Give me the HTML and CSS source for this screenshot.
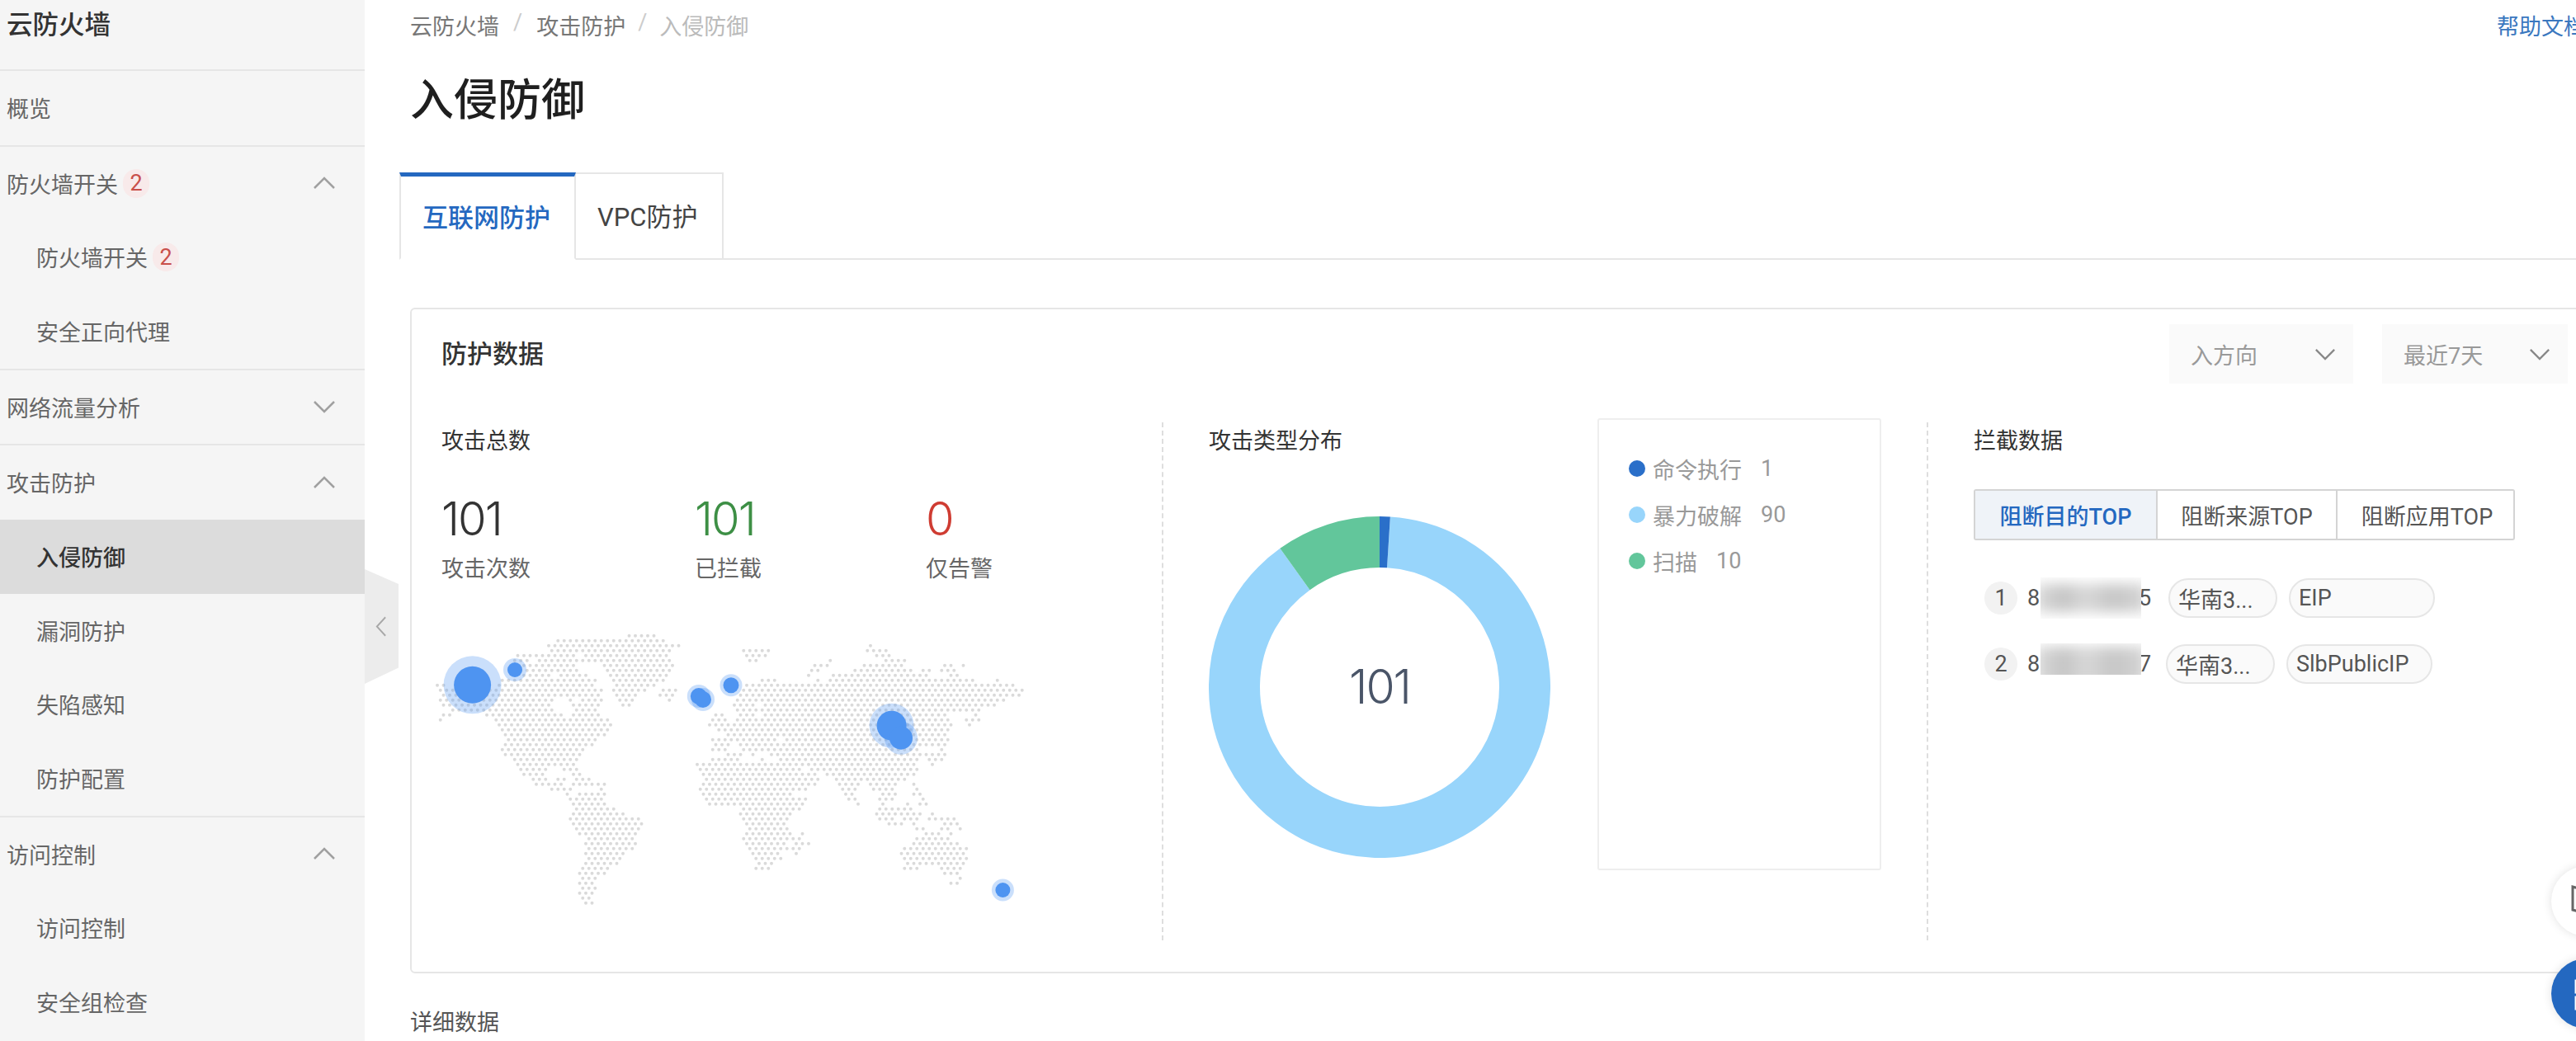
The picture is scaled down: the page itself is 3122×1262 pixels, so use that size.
FILE: index.html
```html
<!DOCTYPE html>
<html lang="zh-CN">
<head>
<meta charset="utf-8">
<title>入侵防御</title>
<link rel="stylesheet" href="styles.css">
</head>
<body>
<div class="app">
  <aside class="sidebar">
    <div class="side-title">云防火墙</div>
    <nav class="side-nav">
      <section class="side-group"><a class="side-row">概览</a></section>
      <section class="side-group">
        <a class="side-row"><span>防火墙开关</span><b class="badge">2</b><svg class="chev" viewBox="0 0 28 16"><path d="M2 14 14 2l12 12"/></svg></a>
        <a class="side-row sub"><span>防火墙开关</span><b class="badge">2</b></a>
        <a class="side-row sub">安全正向代理</a>
      </section>
      <section class="side-group">
        <a class="side-row"><span>网络流量分析</span><svg class="chev" viewBox="0 0 28 16"><path d="M2 2l12 12L26 2"/></svg></a>
      </section>
      <section class="side-group">
        <a class="side-row"><span>攻击防护</span><svg class="chev" viewBox="0 0 28 16"><path d="M2 14 14 2l12 12"/></svg></a>
        <a class="side-row sub active">入侵防御</a>
        <a class="side-row sub">漏洞防护</a>
        <a class="side-row sub">失陷感知</a>
        <a class="side-row sub">防护配置</a>
      </section>
      <section class="side-group">
        <a class="side-row"><span>访问控制</span><svg class="chev" viewBox="0 0 28 16"><path d="M2 14 14 2l12 12"/></svg></a>
        <a class="side-row sub">访问控制</a>
        <a class="side-row sub">安全组检查</a>
      </section>
    </nav>
    <div class="collapse"><svg viewBox="0 0 16 28"><path d="M14 2 3 14l11 12"/></svg></div>
  </aside>

  <main class="main">
    <div class="crumb-row">
      <div class="crumbs"><span>云防火墙</span><i>/</i><span>攻击防护</span><i class="last">/</i><span class="current">入侵防御</span></div>
      <a class="help">帮助文档</a>
    </div>
    <h1 class="page-title">入侵防御</h1>
    <div class="tabs">
      <a class="tab on">互联网防护</a>
      <a class="tab">VPC防护</a>
    </div>

    <section class="card">
      <header class="card-head">
        <h2>防护数据</h2>
        <div class="selects">
          <div class="select select-a"><span>入方向</span><svg viewBox="0 0 28 16"><path d="M2 2l12 12L26 2"/></svg></div>
          <div class="select"><span>最近7天</span><svg viewBox="0 0 28 16"><path d="M2 2l12 12L26 2"/></svg></div>
        </div>
      </header>
      <div class="card-body">
        <div class="col col-total">
          <h3>攻击总数</h3>
          <div class="stats">
            <div class="stat"><strong>101</strong><span>攻击次数</span></div>
            <div class="stat green"><strong>101</strong><span>已拦截</span></div>
            <div class="stat red"><strong>0</strong><span>仅告警</span></div>
          </div>
          <svg class="map" viewBox="0 0 780 390">
            <svg width="780" height="390" viewBox="0 -3.8 208 65" preserveAspectRatio="none">
              <path class="dots" vector-effect="non-scaling-stroke" d="M70 0H78.5M47 1H81.5M44 2H86.5M148 2H148.5M45 3H57.5M59 3H83.5M107 3H115.5M147 3H153.5M34 4H38.5M40 4H52.5M56 4H82.5M108 4H114.5M150 4H154.5M33 5H37.5M41 5H53.5M55 5H83.5M109 5H111.5M135 5H135.5M153 5H159.5M34 6H52.5M62 6H84.5M130 6H134.5M146 6H158.5M172 6H174.5M178 6H178.5M35 7H53.5M63 7H83.5M129 7H131.5M143 7H161.5M165 7H167.5M171 7H175.5M36 8H40.5M42 8H44.5M48 8H56.5M64 8H82.5M128 8H128.5M136 8H166.5M174 8H176.5M29 9H59.5M65 9H81.5M113 9H117.5M131 9H131.5M135 9H181.5M189 9H189.5M8 10H10.5M28 10H58.5M66 10H78.5M108 10H122.5M124 10H194.5M9 11H51.5M53 11H61.5M65 11H75.5M81 11H85.5M107 11H197.5M10 12H50.5M52 12H60.5M66 12H72.5M80 12H84.5M106 12H196.5M9 13H45.5M51 13H51.5M55 13H61.5M67 13H71.5M83 13H83.5M105 13H191.5M10 14H44.5M52 14H60.5M68 14H70.5M104 14H110.5M114 14H188.5M13 15H15.5M17 15H45.5M53 15H59.5M105 15H111.5M113 15H175.5M177 15H179.5M181 15H183.5M10 16H12.5M24 16H48.5M52 16H60.5M98 16H100.5M106 16H110.5M114 16H172.5M182 16H182.5M9 17H9.5M27 17H63.5M97 17H101.5M105 17H173.5M179 17H183.5M28 18H64.5M96 18H174.5M180 18H180.5M29 19H63.5M99 19H173.5M30 20H62.5M102 20H172.5M31 21H59.5M97 21H117.5M121 21H125.5M127 21H173.5M30 22H58.5M98 22H102.5M106 22H172.5M29 23H55.5M97 23H101.5M107 23H113.5M115 23H163.5M171 23H171.5M30 24H54.5M102 24H106.5M110 24H110.5M116 24H164.5M166 24H172.5M33 25H53.5M97 25H105.5M113 25H113.5M119 25H163.5M167 25H171.5M34 26H52.5M92 26H126.5M128 26H162.5M168 26H168.5M35 27H43.5M49 27H53.5M93 27H125.5M129 27H163.5M36 28H42.5M52 28H54.5M94 28H118.5M120 28H128.5M130 28H130.5M134 28H162.5M39 29H43.5M47 29H49.5M53 29H57.5M95 29H119.5M121 29H131.5M137 29H159.5M40 30H48.5M52 30H62.5M94 30H120.5M122 30H130.5M138 30H144.5M148 30H156.5M162 30H162.5M45 31H51.5M61 31H61.5M93 31H127.5M139 31H143.5M149 31H155.5M163 31H163.5M50 32H50.5M54 32H62.5M94 32H122.5M140 32H142.5M152 32H156.5M162 32H164.5M51 33H61.5M95 33H127.5M141 33H143.5M151 33H155.5M165 33H165.5M52 34H62.5M96 34H126.5M144 34H144.5M152 34H152.5M160 34H160.5M164 34H166.5M53 35H65.5M107 35H125.5M151 35H161.5M52 36H68.5M106 36H122.5M150 36H164.5M168 36H168.5M51 37H73.5M107 37H121.5M151 37H155.5M159 37H163.5M167 37H175.5M52 38H74.5M108 38H120.5M154 38H158.5M162 38H162.5M172 38H176.5M53 39H73.5M109 39H121.5M163 39H165.5M171 39H173.5M177 39H177.5M54 40H72.5M108 40H122.5M126 40H126.5M166 40H170.5M174 40H174.5M57 41H71.5M107 41H125.5M163 41H173.5M56 42H72.5M108 42H120.5M124 42H128.5M162 42H176.5M57 43H71.5M109 43H121.5M123 43H125.5M159 43H179.5M56 44H68.5M110 44H118.5M124 44H124.5M158 44H178.5M57 45H67.5M111 45H119.5M159 45H179.5M56 46H66.5M112 46H116.5M160 46H178.5M55 47H63.5M111 47H115.5M159 47H163.5M171 47H177.5M54 48H62.5M172 48H176.5M55 49H59.5M177 49H177.5M54 50H58.5M174 50H176.5M55 51H59.5M54 52H58.5M55 53H57.5M56 54H58.5"/>
            </svg>
            <g class="halo">
              <circle cx="72.6" cy="82.3" r="35"/><circle cx="124" cy="64" r="14"/>
              <circle cx="346.8" cy="96" r="14"/><circle cx="352" cy="100" r="14"/>
              <circle cx="386" cy="82.7" r="13.5"/>
              <circle cx="580.6" cy="131.7" r="27"/><circle cx="592" cy="146.7" r="20"/>
              <circle cx="715.4" cy="331" r="13.5"/>
            </g>
            <g class="core">
              <circle cx="72.6" cy="82.3" r="22.5"/><circle cx="124" cy="64" r="9"/>
              <circle cx="346.8" cy="96" r="10"/><circle cx="352" cy="100" r="10"/>
              <circle cx="386" cy="82.7" r="9.5"/>
              <circle cx="580.6" cy="131.7" r="18"/><circle cx="592" cy="146.7" r="14"/>
              <circle cx="715.4" cy="331" r="9"/>
            </g>
          </svg>
        </div>

        <div class="col col-type">
          <div class="type-left">
            <h3>攻击类型分布</h3>
            <svg class="donut" viewBox="0 0 414 414">
              <path class="arc arc-b" d="M217.94 31.34A176 176 0 1 1 104.44 63.96"/>
              <path class="arc arc-c" d="M104.44 63.96A176 176 0 0 1 207 31"/>
              <path class="arc arc-a" d="M207 31A176 176 0 0 1 217.94 31.34"/>
              <text class="donut-num" x="207" y="227">101</text>
            </svg>
          </div>
          <ul class="legend">
            <li><i class="dot dot-a"></i><span>命令执行</span><em>1</em></li>
            <li><i class="dot dot-b"></i><span>暴力破解</span><em>90</em></li>
            <li><i class="dot dot-c"></i><span>扫描</span><em>10</em></li>
          </ul>
        </div>

        <div class="col col-block">
          <h3>拦截数据</h3>
          <div class="seg-tabs">
            <a class="seg on">阻断目的TOP</a>
            <a class="seg">阻断来源TOP</a>
            <a class="seg">阻断应用TOP</a>
          </div>
          <div class="ip-row">
            <span class="rank">1</span>
            <span class="ip">8</span><span class="mask"><i></i></span><span class="ip ip-tail">5</span>
            <span class="tag">华南3...</span><span class="tag tag-wide">EIP</span>
          </div>
          <div class="ip-row row-two">
            <span class="rank">2</span>
            <span class="ip">8</span><span class="mask mask-low"><i></i></span><span class="ip ip-tail">7</span>
            <span class="tag">华南3...</span><span class="tag tag-wide">SlbPublicIP</span>
          </div>
        </div>
      </div>
    </section>
    <div class="detail">详细数据</div>
  </main>
</div>

<div class="fab fab-white"><svg viewBox="0 0 40 40"><path d="M2 4l14 4 14-4v28l-14 4-14-4z"/></svg></div>
<div class="fab fab-blue"><svg viewBox="0 0 40 40"><rect x="2" y="3" width="14" height="14"/><rect x="2" y="23" width="14" height="14"/><rect x="24" y="3" width="14" height="14"/><rect x="24" y="23" width="14" height="14"/></svg></div>
</body>
</html>
```
FILE: styles.css
```css
* { box-sizing: border-box; }
html, body { margin: 0; height: 100%; overflow: hidden; background: #fff; }
body { font-family: Roboto, "Noto Sans CJK SC", sans-serif; font-size: 27px; color: #555; }
h1, h2, h3, ul { margin: 0; padding: 0; font-weight: 400; }
.app { display: flex; width: 3162px; height: 1262px; }

.sidebar { position: relative; flex: 0 0 442px; height: 1262px; background: #f5f5f5; }
.side-title { height: 84px; padding: 9px 8px 0; font-size: 31.5px; line-height: 44px; font-weight: 500; color: #333; }
.side-group { border-top: 2px solid #e6e6e6; }
.side-row { display: flex; align-items: center; height: 89.7px; padding: 0 0 1px 8px; color: #666; }
.side-row.sub { padding-left: 44px; }
.side-row.active { background: #dcdcdc; color: #333; font-weight: 500; }
.badge { display: inline-flex; align-items: center; justify-content: center; width: 32px; height: 35px; margin-left: 6px; border-radius: 16px; background: #f8eaea; color: #c9504a; font-weight: 400; }
.chev { width: 28px; height: 16px; margin-left: auto; margin-right: 35px; fill: none; stroke: #a0a0a0; stroke-width: 2.5; }
.collapse { position: absolute; left: 442px; top: 690px; width: 41px; height: 139px; display: flex; align-items: center; padding-left: 12px; background: #ececec; clip-path: polygon(0 0, 100% 13%, 100% 86%, 0 100%); }
.collapse svg { width: 15px; height: 27px; fill: none; stroke: #a8a8a8; stroke-width: 2; }

.main { flex: 1; padding-left: 42px; min-width: 0; }
.crumb-row { display: flex; justify-content: space-between; align-items: center; height: 60px; margin-bottom: 4px; padding: 0 28px 0 13px; }
.crumbs { display: flex; color: #777; }
.crumbs i { margin: 0 17px; color: #ccc; font-style: normal; }
.crumbs i.last { margin: 0 15px; }
.crumbs .current { color: #bbb; }
.help { color: #3b78bf; }
.page-title { height: 145px; padding-left: 13px; padding-top: 21px; font-size: 53px; line-height: 74px; font-weight: 500; color: #1f1f1f; }
.tabs { display: flex; height: 106px; border-bottom: 2px solid #e6e6e6; }
.tab { display: flex; align-items: center; height: 106px; padding: 0 30px 4px 26px; border: 2px solid #e6e6e6; border-left: 0; font-size: 31px; color: #444; }
.tab.on { width: 214px; padding: 0 0 4px 26px; border-top: 5px solid #2468c0; border-left: 2px solid #e6e6e6; border-bottom-color: #fff; color: #2468c0; font-weight: 500; }

.card { margin: 58px 12px 0 13px; height: 807px; border: 2px solid #e6e6e6; border-radius: 6px; }
.card-head { display: flex; justify-content: space-between; padding: 18px 36px 0; height: 137px; align-items: flex-start; }
.card-head h2 { height: 72px; font-size: 31px; line-height: 74px; color: #333; font-weight: 500; }
.selects { display: flex; gap: 35px; }
.select { display: flex; align-items: center; justify-content: space-between; width: 225px; height: 72px; padding: 0 21px 0 26px; background: #fafafa; color: #999; }
.select-a { width: 223px; }
.select svg { width: 26px; height: 15px; fill: none; stroke: #888; stroke-width: 2.5; }
.card-body { display: flex; height: 628px; }
.col h3 { height: 44px; font-size: 27px; line-height: 46px; color: #333; }
.col-total { flex: 0 0 911px; padding-left: 36px; border-right: 2px dashed #dedede; }
.stats { display: flex; margin-top: 43px; }
.stat { display: flex; flex-direction: column; }
.stat:nth-child(1) { width: 307px; }
.stat:nth-child(2) { width: 280px; }
.stat strong { height: 60px; font-family: Inter, Roboto, sans-serif; font-size: 56px; line-height: 60px; font-weight: 300; letter-spacing: -2px; color: #333; }
.stat span { height: 40px; margin-top: 11px; line-height: 40px; color: #666; }
.stat.green strong { color: #3d8f45; }
.stat.red strong { color: #cf3c32; }
.map { display: block; width: 780px; height: 390px; margin: 38px 0 0 -35px; }
.dots { fill: none; stroke: #dadada; stroke-width: 4; stroke-linecap: round; stroke-dasharray: 0 7.5; }
.halo circle { fill: #4e94f1; fill-opacity: .3; }
.core circle { fill: #4e94f1; }

.col-type { flex: 0 0 927px; display: flex; padding-left: 55px; border-right: 2px dashed #dedede; }
.type-left { flex: 0 0 471px; }
.donut { display: block; width: 414px; height: 414px; margin-top: 70px; }
.arc { fill: none; stroke-width: 62; }
.arc-a { stroke: #2a6fc9; }
.arc-b { stroke: #98d5fb; }
.arc-c { stroke: #62c69b; }
.donut-num { font-family: Inter, Roboto, sans-serif; font-size: 57px; font-weight: 300; letter-spacing: -2px; text-anchor: middle; fill: #4a5568; }
.legend { flex: 0 0 344px; height: 548px; margin-top: -5px; padding-top: 31px; list-style: none; border: 2px solid #eee; border-radius: 3px; }
.legend li { display: flex; align-items: center; height: 56px; padding-left: 36px; color: #999; }
.dot { width: 20px; height: 20px; margin-right: 9px; border-radius: 50%; }
.dot-a { background: #2a6fc9; }
.dot-b { background: #98d5fb; }
.dot-c { background: #62c69b; }
.legend em { margin-left: 23px; font-style: normal; }

.col-block { flex: 1; padding-left: 55px; }
.seg-tabs { display: grid; grid-template-columns: 219px 218px 219px; width: 656px; height: 62px; margin-top: 37px; border: 2px solid #d4d4d4; border-radius: 3px; }
.seg { display: flex; align-items: center; justify-content: center; color: #555; border-left: 2px solid #d4d4d4; }
.seg.on { border-left: 0; background: #eff3f8; color: #2468c0; font-weight: 500; }
.ip-row { display: flex; align-items: center; height: 80px; padding-left: 13px; color: #555; }
.seg-tabs + .ip-row { margin-top: 30px; }
.rank { display: flex; align-items: center; justify-content: center; width: 40px; height: 40px; margin-right: 12px; border-radius: 50%; background: #f2f2f2; }
.ip { width: 16px; }
.ip-tail { width: 18px; margin-left: -3px; }
.mask { position: relative; z-index: 1; width: 122px; height: 50px; overflow: hidden; background: #fff; }
.mask i { display: block; position: absolute; inset: 8px -6px; background: linear-gradient(90deg, #dcdcdc, #c4c4c4 25%, #d8d8d8 45%, #c6c6c6 70%, #d4d4d4); filter: blur(8px); }
.mask-low { height: 38px; margin-top: -12px; }
.mask-low i { inset: 4px -6px -12px; }
.tag { display: flex; align-items: center; width: 132px; height: 48px; margin-left: 18px; padding-left: 10px; border: 2px solid #e6e6e6; border-radius: 24px; background: #fafafa; color: #555; }
.tag-wide { width: 177px; margin-left: 14px; }
.row-two .tag:not(.tag-wide) { margin-left: 15px; }

.detail { margin: 42px 0 0 13px; height: 36px; line-height: 36px; color: #555; }

.fab { position: fixed; left: 3092px; width: 85px; height: 85px; border-radius: 50%; box-shadow: 0 0 12px rgba(0,0,0,.12); }
.fab svg { position: absolute; left: 24px; top: 21px; width: 40px; height: 40px; }
.fab-white { top: 1050px; background: #fff; }
.fab-white svg { fill: none; stroke: #666; stroke-width: 3; }
.fab-blue { top: 1162px; background: #2468c0; }
.fab-blue svg { left: 28px; top: 24px; fill: none; stroke: #fff; stroke-width: 3; }
```
